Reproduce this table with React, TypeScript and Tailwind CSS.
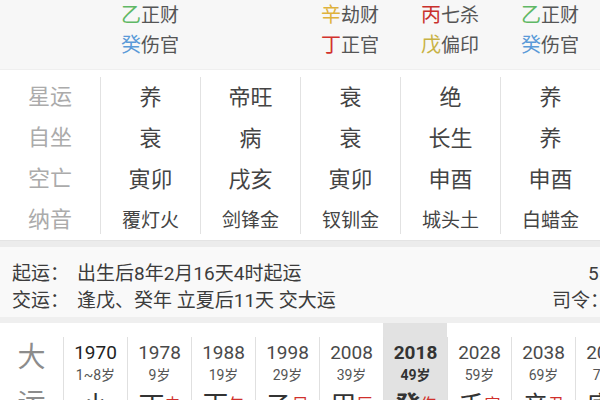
import React from "react";

const FONT = "font-['Roboto','Noto_Sans_CJK_SC',sans-serif]";

type TG = { s: string; c: string; g: string };

const top: (TG[] | null)[] = [
  null,
  [
    { s: "乙", c: "text-[#5fb865]", g: "正财" },
    { s: "癸", c: "text-[#5a9ad8]", g: "伤官" },
  ],
  [],
  [
    { s: "辛", c: "text-[#dfb23c]", g: "劫财" },
    { s: "丁", c: "text-[#d2322d]", g: "正官" },
  ],
  [
    { s: "丙", c: "text-[#c9302c]", g: "七杀" },
    { s: "戊", c: "text-[#c8b244]", g: "偏印" },
  ],
  [
    { s: "乙", c: "text-[#5fb865]", g: "正财" },
    { s: "癸", c: "text-[#5a9ad8]", g: "伤官" },
  ],
];

const labels = ["星运", "自坐", "空亡", "纳音"];
const cols = [
  ["养", "衰", "寅卯", "覆灯火"],
  ["帝旺", "病", "戌亥", "剑锋金"],
  ["衰", "衰", "寅卯", "钗钏金"],
  ["绝", "长生", "申酉", "城头土"],
  ["养", "养", "申酉", "白蜡金"],
];

const dayun = [
  { y: "1970", a: "1~8岁", s: "小", r: "", strong: true },
  { y: "1978", a: "9岁", s: "丁", r: "未" },
  { y: "1988", a: "19岁", s: "丙", r: "午" },
  { y: "1998", a: "29岁", s: "乙", r: "巳" },
  { y: "2008", a: "39岁", s: "甲", r: "辰" },
  { y: "2018", a: "49岁", s: "癸", r: "伤", hl: true },
  { y: "2028", a: "59岁", s: "壬", r: "寅" },
  { y: "2038", a: "69岁", s: "辛", r: "丑" },
  { y: "2048", a: "79岁", s: "庚", r: "子" },
];

export default function App() {
  return (
    <div className={`w-[600px] h-[400px] overflow-hidden bg-white ${FONT}`}>
      {/* top ten gods */}
      <div className="h-[70px] bg-[#f7f7f7] flex border-b border-[#efefef]">
        {top.map((col, i) => (
          <div key={i} className="w-[100px] shrink-0 flex flex-col items-center">
            {col &&
              col.map((t, j) => (
                <div key={j} className="h-[30px] flex items-center leading-none">
                  <span className={`text-[20px] ${t.c}`}>{t.s}</span>
                  <span className="text-[19px] text-[#555]">{t.g}</span>
                </div>
              ))}
          </div>
        ))}
      </div>

      {/* middle table */}
      <div className="h-[170px] bg-white flex pt-[7px] overflow-hidden">
        <div className="w-[100px] shrink-0 flex flex-col">
          {labels.map((l) => (
            <div key={l} className="h-[41px] flex items-center justify-center text-[22px] text-[#ababab] leading-none">
              {l}
            </div>
          ))}
        </div>
        {cols.map((c, i) => (
          <div key={i} className="w-[100px] shrink-0 flex flex-col border-l border-[#e2e2e2] h-[157px]">
            {c.map((v, j) => (
              <div
                key={j}
                className={`h-[41px] shrink-0 flex items-center justify-center leading-none text-[#444] ${
                  j === 3 ? "text-[19px]" : "text-[22px]"
                }`}
              >
                {v}
              </div>
            ))}
          </div>
        ))}
      </div>

      {/* band */}
      <div className="h-[7px] bg-[#ececec] border-t border-[#e4e4e4]" />

      {/* qiyun */}
      <div className="h-[70px] bg-[#f9f9f9] flex flex-col pt-[13px] text-[19px] text-[#3c3c3c] leading-none">
        <div className="h-[27px] flex items-center">
          <span className="w-[77px] pl-[12px] shrink-0">起运：</span>
          <span className="w-[475px] shrink-0">出生后8年2月16天4时起运</span>
          <span className="pl-[36px] whitespace-nowrap">55岁</span>
        </div>
        <div className="h-[27px] flex items-center">
          <span className="w-[77px] pl-[12px] shrink-0">交运：</span>
          <span className="w-[475px] shrink-0">逢戊、癸年 立夏后11天 交大运</span>
          <span className="whitespace-nowrap">司令：戊土</span>
        </div>
      </div>

      {/* band */}
      <div className="h-[6px] bg-[#efefef]" />

      {/* dayun */}
      <div className="flex bg-white h-[77px]">
        <div className="w-[63px] shrink-0 flex flex-col items-center pt-[12px] text-[28px] leading-[46px] text-[#8c8c8c]">
          <span>大</span>
          <span>运</span>
        </div>
        {dayun.map((d) => (
          <div
            key={d.y}
            className={`w-[64px] shrink-0 flex flex-col ${d.hl ? "bg-[#e2e2e2]" : ""}`}
          >
            <div className="mt-[14px] flex-1 border-l border-[#e0e0e0] flex flex-col items-center">
              <div
                className={`mt-[4px] h-[22px] flex items-center text-[19px] leading-none ${
                  d.hl ? "font-bold text-[#333]" : d.strong ? "text-[#222]" : "text-[#4a4a4a]"
                }`}
              >
                {d.y}
              </div>
              <div
                className={`h-[24px] flex items-center text-[14px] leading-none ${
                  d.hl ? "font-bold text-[#333]" : "text-[#555]"
                }`}
              >
                {d.a}
              </div>
              <div className="mt-[6px] flex items-start leading-none">
                <span className={`text-[26px] ${d.hl ? "font-bold text-[#333]" : "text-[#333]"}`}>{d.s}</span>
                <span className="text-[16px] text-[#d0302c] mt-[4px]">{d.r}</span>
              </div>
            </div>
          </div>
        ))}
      </div>
    </div>
  );
}
